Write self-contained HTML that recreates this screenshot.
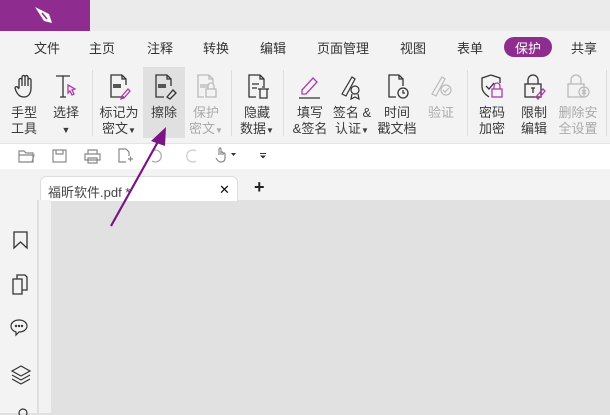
<!DOCTYPE html>
<html><head><meta charset="utf-8"><style>
*{margin:0;padding:0;box-sizing:border-box}
body{width:610px;height:413px;overflow:hidden;position:relative;background:#e1e1e1;font-family:"Liberation Sans","Noto Sans CJK SC",sans-serif;color:#333}
.a{position:absolute}
.m{position:absolute;top:38px;font-size:13px;color:#333;transform:translateX(-50%);white-space:nowrap}
.l{position:absolute;font-size:13px;line-height:16px;text-align:center;transform:translateX(-50%);white-space:nowrap;top:105px;color:#3a3a3a}
.l.g{color:#aaa}
.sep{position:absolute;top:70px;width:1px;height:66px;background:#ddd}
svg{position:absolute;overflow:visible}
</style></head><body>
<div class="a" style="left:0;top:0;width:610px;height:31px;background:#ebebeb"></div>
<div class="a" style="left:0;top:0;width:90px;height:31px;background:#8e2c8f"></div>
<svg style="left:32px;top:5px" width="24" height="22"><path d="M3 2 L17 9 L20 18 L12 16 Z" fill="#fff"/><path d="M10 8 L15 14" stroke="#8e2c8f" stroke-width="1.5"/></svg>
<div class="a" style="left:0;top:31px;width:610px;height:112px;background:#f3f3f3"></div>
<div class="m" style="left:47px">文件</div><div class="m" style="left:102px">主页</div><div class="m" style="left:160px">注释</div><div class="m" style="left:216px">转换</div><div class="m" style="left:273px">编辑</div><div class="m" style="left:343px">页面管理</div><div class="m" style="left:413px">视图</div><div class="m" style="left:470px">表单</div>
<div class="a" style="left:504px;top:37px;width:48px;height:20px;border-radius:10px;background:#8e2c8f"></div>
<div class="m" style="left:528px;color:#fff">保护</div><div class="m" style="left:584px">共享</div>
<div class="a" style="left:143px;top:67px;width:42px;height:71px;background:#e0e0e0"></div>
<div class="sep" style="left:92px"></div><div class="sep" style="left:231px"></div><div class="sep" style="left:283px"></div><div class="sep" style="left:467px"></div><div class="sep" style="left:606px"></div>
<div class="l" style="left:24px">手型<br>工具</div>
<div class="l" style="left:66px">选择<br><span style="font-size:9px">▼</span></div>
<div class="l" style="left:119px">标记为<br>密文<span style="font-size:8px">▼</span></div>
<div class="l" style="left:164px">擦除</div>
<div class="l g" style="left:206px">保护<br>密文<span style="font-size:8px">▼</span></div>
<div class="l" style="left:257px">隐藏<br>数据<span style="font-size:8px">▼</span></div>
<div class="l" style="left:310px">填写<br>&amp;签名</div>
<div class="l" style="left:352px">签名 &amp;<br>认证<span style="font-size:8px">▼</span></div>
<div class="l" style="left:397px">时间<br>戳文档</div>
<div class="l g" style="left:441px">验证</div>
<div class="l" style="left:492px">密码<br>加密</div>
<div class="l" style="left:534px">限制<br>编辑</div>
<div class="l g" style="left:578px">删除安<br>全设置</div>
<svg style="left:14px;top:74px" width="22" height="26" fill="none" stroke="#333" stroke-width="1.3"><path d="M5 14V6a1.5 1.5 0 013 0v6M8 12V3a1.5 1.5 0 013 0v9M11 12V3a1.5 1.5 0 013 0v9M14 12V6a1.5 1.5 0 013 0v8c0 6-3 9-7 9s-6-2-8-6l-1-3a1.5 1.5 0 012.5-1L5 15"/></svg>
<svg style="left:55px;top:75px" width="26" height="26" fill="none" stroke="#333" stroke-width="1.3"><path d="M1 1H15M8 1V22M5 22H11"/><path d="M13 10L20 14L17 15L19 19L17 20L15 16L13 18Z" stroke="#b03ab2"/></svg>
<svg style="left:108px;top:74px" width="24" height="26" fill="none" stroke="#333" stroke-width="1.3"><path d="M14 1H3V23H16M14 1L18 5V11M14 1V5H18"/><rect x="5" y="10" width="8" height="4" fill="#555" stroke="none"/><path d="M14 22L20 15L22 17L16 24L13 25Z" stroke="#b03ab2"/></svg>
<svg style="left:153px;top:74px" width="24" height="26" fill="none" stroke="#333" stroke-width="1.3"><path d="M14 1H3V23H11M14 1L18 5V12M14 1V5H18"/><rect x="5" y="10" width="8" height="4" fill="#555" stroke="none"/><path d="M14 23L20 16L23 19L17 25Z"/></svg>
<svg style="left:195px;top:74px" width="24" height="26" fill="none" stroke="#bbb" stroke-width="1.3"><path d="M14 1H3V23H9M14 1L18 5V10M14 1V5H18"/><rect x="5" y="10" width="8" height="4" fill="#ccc" stroke="none"/><rect x="11" y="15" width="10" height="8"/><path d="M13 15V12a3 3 0 016 0V15"/></svg>
<svg style="left:246px;top:74px" width="24" height="26" fill="none" stroke="#333" stroke-width="1.3"><path d="M14 1H3V23H10M14 1L18 5V12M14 1V5H18M6 10H13M6 14H11"/><path d="M12 15H23M14 15V24H21V15M16 13H19"/></svg>
<svg style="left:298px;top:74px" width="24" height="26" fill="none" stroke="#b03ab2" stroke-width="1.3"><path d="M4 16L15 4L19 8L8 20H4Z"/><path d="M1 24H22" stroke="#333"/></svg>
<svg style="left:340px;top:74px" width="24" height="26" fill="none" stroke="#333" stroke-width="1.2"><path d="M2 20L12 3L15 5L6 22Z"/><circle cx="15" cy="16" r="4"/><path d="M12 20L11 25L15 23L19 25L18 20"/></svg>
<svg style="left:386px;top:74px" width="24" height="26" fill="none" stroke="#333" stroke-width="1.3"><path d="M13 1H3V23H10M13 1L17 5V12M13 1V5H17"/><circle cx="17" cy="19" r="5"/><path d="M17 16V19H19"/></svg>
<svg style="left:430px;top:74px" width="24" height="26" fill="none" stroke="#bbb" stroke-width="1.2"><path d="M2 20L12 3L15 5L6 22Z"/><circle cx="16" cy="16" r="5"/><path d="M13 16L15 18L19 14"/></svg>
<svg style="left:481px;top:74px" width="24" height="26" fill="none" stroke="#333" stroke-width="1.3"><path d="M10 1L19 4V9M10 1L1 4V13C1 18 5 21 8 23"/><path d="M5 12L8 15L13 9"/><rect x="11" y="15" width="10" height="8" stroke="#b03ab2"/><path d="M13 15V12a3 3 0 016 0V15" stroke="#b03ab2"/></svg>
<svg style="left:523px;top:74px" width="24" height="26" fill="none" stroke="#333" stroke-width="1.3"><rect x="2" y="10" width="16" height="13"/><path d="M5 10V6a5 5 0 0110 0V10M8 14H12M10 14V19"/><path d="M13 23L20 15L22 17L15 25Z" stroke="#b03ab2"/></svg>
<svg style="left:566px;top:74px" width="24" height="26" fill="none" stroke="#bbb" stroke-width="1.3"><rect x="2" y="10" width="16" height="13"/><path d="M5 10V6a5 5 0 0110 0V10"/><circle cx="18" cy="18" r="5"/><path d="M16 16L20 20M20 16L16 20"/></svg>
<div class="a" style="left:0;top:143px;width:610px;height:26px;background:#fff;border-top:1px solid #e4e4e4"></div>
<svg style="left:18px;top:149px" width="18" height="14" fill="none" stroke="#888" stroke-width="1.2"><path d="M1 2H6L8 4H15V13H1Z M1 6H16L14 13"/></svg>
<svg style="left:52px;top:149px" width="16" height="14" fill="none" stroke="#888" stroke-width="1.2"><rect x="1" y="1" width="13" height="12"/><path d="M4 1V5H11V1"/></svg>
<svg style="left:84px;top:149px" width="18" height="15" fill="none" stroke="#888" stroke-width="1.2"><path d="M4 5V1H13V5M1 5H16V11H1Z M4 9H13V14H4Z"/></svg>
<svg style="left:118px;top:148px" width="16" height="16" fill="none" stroke="#888" stroke-width="1.2"><path d="M8 1H1V14H8M8 1L11 4V8M10 11H15M12.5 8.5V13.5"/></svg>
<svg style="left:150px;top:149px" width="16" height="14" fill="none" stroke="#aaa" stroke-width="1.2"><path d="M2 2a6 6 0 110 10"/></svg>
<svg style="left:184px;top:149px" width="16" height="14" fill="none" stroke="#ccc" stroke-width="1.2"><path d="M12 2a6 6 0 100 10"/></svg>
<svg style="left:214px;top:147px" width="24" height="16" fill="none" stroke="#888" stroke-width="1.2"><path d="M5 8V2a1 1 0 012 0v6M7 6a1 1 0 012 0v2M9 7a1 1 0 012 0v4c0 3-2 4-4 4s-4-2-5-4"/><path d="M17 6H22L19.5 9Z" fill="#333" stroke="none"/></svg>
<svg style="left:260px;top:153px" width="6" height="6"><path d="M0 0.5H6" stroke="#333" stroke-width="1"/><path d="M0 2.5H6L3 5.5Z" fill="#333"/></svg>
<div class="a" style="left:0;top:169px;width:610px;height:31px;background:#f3f3f3"></div>
<div class="a" style="left:40px;top:176px;width:198px;height:25px;background:#fff;border:1px solid #ddd;border-bottom:none;border-radius:6px 6px 0 0"></div>
<div class="a" style="left:48px;top:182px;font-size:13px;color:#444">福昕软件.pdf *</div>
<div class="a" style="left:219px;top:182px;font-size:13px;color:#111">✕</div>
<div class="a" style="left:254px;top:177px;font-size:18px;font-weight:bold;color:#222">+</div>
<div class="a" style="left:0;top:200px;width:38px;height:213px;background:#f3f3f3;border-right:1px solid #ddd"></div>
<div class="a" style="left:39px;top:200px;width:12px;height:213px;background:#f2f2f2"></div>
<svg style="left:13px;top:231px" width="16" height="20" fill="none" stroke="#333" stroke-width="1.3"><path d="M1 1H14V17L7.5 11L1 17Z"/></svg>
<svg style="left:12px;top:274px" width="18" height="22" fill="none" stroke="#333" stroke-width="1.3"><path d="M1 5H10V20H1Z M5 5V1H13L15 3V16H10"/></svg>
<svg style="left:10px;top:318px" width="20" height="20" fill="none" stroke="#333" stroke-width="1.2"><path d="M9 2C4 2 1 5 1 8c0 3 2 5 5 6v3l3-3c5 0 8-3 8-6s-3-6-8-6Z"/><circle cx="6" cy="8" r=".6" fill="#333"/><circle cx="9" cy="8" r=".6" fill="#333"/><circle cx="12" cy="8" r=".6" fill="#333"/></svg>
<svg style="left:11px;top:365px" width="20" height="20" fill="none" stroke="#333" stroke-width="1.2"><path d="M10 1L19 6L10 11L1 6Z M1 10L10 15L19 10 M1 14L10 19L19 14"/></svg>
<svg style="left:17px;top:407px" width="12" height="8" fill="none" stroke="#333" stroke-width="1.2"><circle cx="6" cy="6" r="4"/></svg>
<svg style="left:0;top:0" width="610" height="413"><path d="M111 226L160 138" stroke="#7a1585" stroke-width="2.2"/><path d="M166 127L151 141L165 146Z" fill="#7a1585"/></svg>
</body></html>
